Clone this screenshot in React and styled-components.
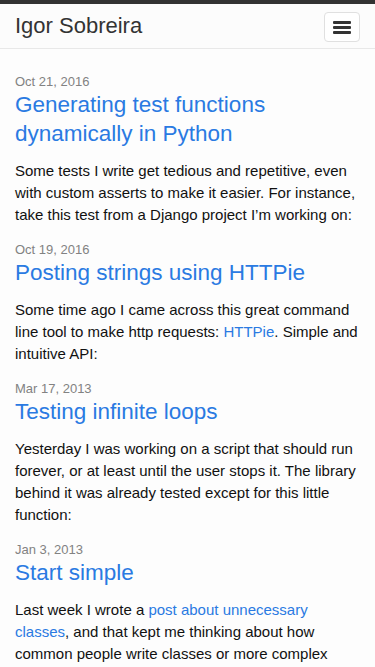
import React from "react";
import styled, { createGlobalStyle } from "styled-components";

const Global = createGlobalStyle`
  html, body { margin: 0; padding: 0; }
  body {
    background: #fdfdfd;
    font-family: "Liberation Sans", Arial, Helvetica, sans-serif;
    color: #111;
    -webkit-font-smoothing: antialiased;
  }
  * { box-sizing: border-box; }
`;

const Page = styled.div`
  min-height: 667px;
  border-top: 4px solid #333;
`;

const Navbar = styled.header`
  display: flex;
  align-items: center;
  justify-content: space-between;
  height: 45px;
  padding: 0 15px;
  background: #fcfcfc;
  border-bottom: 1px solid #e8e8e8;
`;

const Brand = styled.a`
  font-size: 22px;
  color: #333;
  text-decoration: none;
  margin-top: -1px;
`;

const Toggle = styled.button`
  width: 36px;
  height: 30px;
  margin-top: 2px;
  display: flex;
  flex-direction: column;
  justify-content: center;
  align-items: center;
  gap: 2px;
  background: #fff;
  border: 1px solid #e0e0e0;
  border-radius: 4px;
  padding: 0;
`;

const Bar = styled.span`
  display: block;
  width: 18px;
  height: 3px;
  background: #333;
  border-radius: 1px;
`;

const Main = styled.main`
  padding: 24px 15px 0;
  display: flex;
  flex-direction: column;
  gap: 15px;
`;

const Post = styled.article`
  display: flex;
  flex-direction: column;
`;

const PostDate = styled.span`
  font-size: 13px;
  line-height: 18px;
  color: #828282;
`;

const PostTitle = styled.h2`
  margin: -1px 0 0;
  font-size: 22.5px;
  line-height: 29px;
  font-weight: normal;
  color: #2a7ae2;
`;

const Excerpt = styled.p`
  margin: 12px 0 0;
  font-size: 15px;
  line-height: 22px;
  color: #111;
`;

const Link = styled.a`
  color: #2a7ae2;
  text-decoration: none;
`;

const posts = [
  {
    date: "Oct 21, 2016",
    title: "Generating test functions dynamically in Python",
    body: (
      <>
        Some tests I write get tedious and repetitive, even with custom asserts to make it easier. For instance, take this test from a Django project I’m working on:
      </>
    ),
  },
  {
    date: "Oct 19, 2016",
    title: "Posting strings using HTTPie",
    body: (
      <>
        Some time ago I came across this great command line tool to make http requests: <Link href="#">HTTPie</Link>. Simple and intuitive API:
      </>
    ),
  },
  {
    date: "Mar 17, 2013",
    title: "Testing infinite loops",
    body: (
      <>
        Yesterday I was working on a script that should run forever, or at least until the user stops it. The library behind it was already tested except for this little function:
      </>
    ),
  },
  {
    date: "Jan 3, 2013",
    title: "Start simple",
    body: (
      <>
        Last week I wrote a <Link href="#">post about unnecessary classes</Link>, and that kept me thinking about how common people write classes or more complex designs upfront just because it would be easier to change later.
      </>
    ),
  },
];

export default function App() {
  return (
    <>
      <Global />
      <Page>
        <Navbar>
          <Brand href="#">Igor Sobreira</Brand>
          <Toggle aria-label="menu">
            <Bar />
            <Bar />
            <Bar />
          </Toggle>
        </Navbar>
        <Main>
          {posts.map((p) => (
            <Post key={p.title}>
              <PostDate>{p.date}</PostDate>
              <PostTitle>{p.title}</PostTitle>
              <Excerpt>{p.body}</Excerpt>
            </Post>
          ))}
        </Main>
      </Page>
    </>
  );
}
